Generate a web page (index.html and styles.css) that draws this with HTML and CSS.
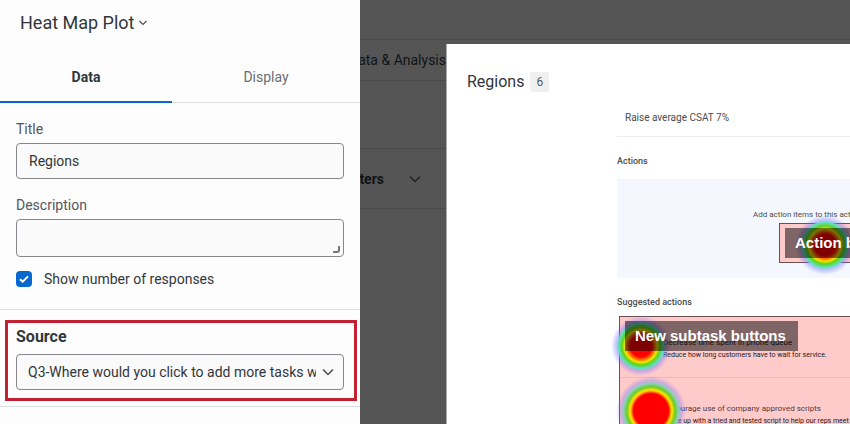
FILE: index.html
```html
<!DOCTYPE html>
<html lang="en">
<head>
  <meta charset="UTF-8" />
  <title>Heat Map Plot</title>
  <meta name="viewport" content="width=device-width, initial-scale=1.0" />
  <link rel="stylesheet" href="styles.css">
</head>
<body>
  <aside class="panel">
    <header class="panel-header">
      <button type="button" class="widget-type">
        Heat Map Plot
        <svg width="8" height="6" viewBox="0 0 8 6"><path d="M.5 1 4 4.5 7.5 1" /></svg>
      </button>
    </header>

    <div class="tabs" role="tablist">
      <button type="button" class="tab active" role="tab" aria-selected="true">Data</button>
      <button type="button" class="tab" role="tab" aria-selected="false">Display</button>
    </div>

    <section class="fields">
      <label for="title">Title</label>
      <input type="text" id="title" value="Regions" />

      <label for="description">Description</label>
      <div class="textarea-wrap">
        <textarea id="description"></textarea>
        <svg class="grip" width="9" height="9" viewBox="0 0 9 9"><path d="M7 1V5Q7 7 5 7H1" /></svg>
      </div>

      <div class="check">
        <span class="check-box">
          <input type="checkbox" id="responses" checked />
          <svg width="16" height="16" viewBox="0 0 16 16"><path d="M4 8.3 6.7 10.6 12 5.4" /></svg>
        </span>
        <label for="responses">Show number of responses</label>
      </div>
    </section>

    <section class="source">
      <div class="highlight">
        <label for="source">Source</label>
        <div class="select-wrap">
          <select id="source">
            <option>Q3-Where would you click to add more tasks within</option>
          </select>
          <svg width="12" height="8" viewBox="0 0 12 8"><path d="M1 1.5 6 6.5 11 1.5" /></svg>
        </div>
      </div>
    </section>
  </aside>

  <main class="stage">
    <div class="page-row top-bar"></div>
    <nav class="page-row nav-bar"><span>Data &amp; Analysis</span></nav>
    <div class="page-row title-bar"></div>
    <div class="page-row filter-bar">
      <span>Filters</span>
      <svg width="12" height="8" viewBox="0 0 12 8"><path d="M1 1.5 6 6.5 11 1.5" /></svg>
    </div>

    <section class="dialog">
      <header class="dialog-header">
        <h1>Regions</h1>
        <span class="count">6</span>
      </header>

      <div class="plan">
        <p class="goal">Raise average CSAT 7%</p>
        <h2>Actions</h2>
        <div class="empty">
          <p>Add action items to this action</p>
          <div class="region action-region">
            <span class="heat"></span>
            <strong>Action buttons</strong>
          </div>
        </div>
        <h2 class="suggested">Suggested actions</h2>
        <div class="region subtask-region">
          <div class="suggestion">
            <h3>Decrease time spent in phone queue</h3>
            <p>Reduce how long customers have to wait for service.</p>
          </div>
          <div class="suggestion">
            <h3>Encourage use of company approved scripts</h3>
            <p>Come up with a tried and tested script to help our reps meet CSAT</p>
          </div>
          <span class="heat first"></span>
          <span class="heat large second"></span>
          <strong>New subtask buttons</strong>
        </div>
      </div>
    </section>
  </main>
</body>
</html>
```

FILE: styles.css
```css
* {
  box-sizing: border-box;
}

body {
  margin: 0;
  min-height: 100vh;
  display: flex;
  font-family: Roboto, "Liberation Sans", sans-serif;
  font-size: 14px;
  line-height: 20px;
  color: #32363a;
  background: #fdfdfd;
}

h1, h2, h3, p {
  margin: 0;
}

button, input, select, textarea {
  font: inherit;
  color: inherit;
}

svg {
  fill: none;
  stroke: #4a4d52;
  stroke-width: 1.5;
}

/* settings panel */
.panel {
  flex: 0 0 360px;
  background: #fdfdfd;
}

.panel-header {
  padding: 11px 20px;
}

.widget-type {
  display: flex;
  align-items: center;
  gap: 4px;
  padding: 0;
  border: none;
  background: none;
  font-size: 18px;
  line-height: 24px;
}

.widget-type svg {
  stroke-width: 1.2;
}

.tabs {
  display: flex;
  margin-top: 6px;
  border-bottom: 1px solid #dcdee0;
}

.tab {
  flex: 188;
  height: 51px;
  margin-bottom: -1px;
  padding: 0;
  border: none;
  border-bottom: 2px solid transparent;
  background: none;
  color: #6a6d72;
}

.tab.active {
  flex: 172;
  border-color: #0768d0;
  color: #32363a;
  font-weight: bold;
}

.fields {
  padding: 16px 16px 20px;
  border-bottom: 1px solid #dcdee0;
}

.fields > label {
  display: block;
  margin-bottom: 4px;
  color: #54575c;
}

.fields > input,
textarea,
select {
  display: block;
  width: 100%;
  height: 36px;
  padding: 0 12px;
  border: 1px solid #85878b;
  border-radius: 4px;
  background: #fafafa;
}

.fields > input {
  margin-bottom: 16px;
}

.textarea-wrap,
.select-wrap {
  position: relative;
}

textarea {
  height: 38px;
  resize: none;
}

.grip {
  position: absolute;
  right: 3px;
  bottom: 3px;
}

.grip path {
  stroke: #777;
  stroke-width: 2;
}

.check {
  display: flex;
  align-items: center;
  gap: 12px;
  margin-top: 12px;
}

.check-box {
  position: relative;
  display: flex;
}

.check-box input {
  appearance: none;
  width: 16px;
  height: 16px;
  margin: 0;
  border-radius: 4px;
  background: #0768d0;
}

.check-box svg {
  position: absolute;
  inset: 0;
  stroke: #fff;
  stroke-width: 2;
  pointer-events: none;
}

.source {
  padding: 10px 3px 5px 5px;
  border-bottom: 1px solid #dcdee0;
}

.highlight {
  padding: 4px 10px 8px 8px;
  border: 3px solid #c22033;
}

.highlight label {
  display: block;
  margin-bottom: 7px;
  font-size: 16px;
  font-weight: bold;
}

select {
  appearance: none;
  padding: 0 27px 0 11px;
}

.select-wrap svg {
  position: absolute;
  right: 10px;
  top: 14px;
  pointer-events: none;
}

/* dimmed page behind the dialog */
.stage {
  position: relative;
  flex: 1;
  min-width: 0;
  overflow: hidden;
  background: #555;
  color: #111315;
}

.page-row {
  display: flex;
  align-items: center;
  justify-content: flex-end;
  border-bottom: 1px solid #4b4b4b;
  white-space: nowrap;
}

.top-bar {
  height: 40px;
}

.nav-bar,
.filter-bar {
  width: 86px;
}

.nav-bar {
  height: 41px;
}

.title-bar {
  height: 68px;
}

.filter-bar {
  height: 60px;
  gap: 25px;
  padding-right: 25px;
  font-weight: bold;
}

.filter-bar svg {
  flex: none;
  stroke: #222;
}

/* dialog */
.dialog {
  position: absolute;
  inset: 44px 0 0 86px;
  overflow: hidden;
  border-left: 1px solid #aaa;
  background: #fff;
  color: #32363a;
}

.dialog-header {
  display: flex;
  align-items: center;
  gap: 6px;
  padding: 28px 20px 0;
}

.dialog-header h1 {
  font-size: 16px;
  font-weight: normal;
}

.count {
  padding: 0 6px;
  border-radius: 2px;
  background: #f0f0f0;
  font-size: 12px;
  color: #54575c;
}

.plan {
  width: 432px;
  margin: 8px 0 0 170px;
  font-size: 8px;
  line-height: 12px;
  color: #4c4c4c;
  white-space: nowrap;
}

.goal {
  padding: 12px 8px;
  border-bottom: 1px solid #eee;
  font-size: 10px;
}

.plan h2 {
  padding: 18px 0 12px;
  font-size: 9px;
  font-weight: 500;
}

.plan .suggested {
  padding-bottom: 8px;
}

.empty {
  height: 99px;
  padding-top: 30px;
  background: #f4f8fe;
}

.empty p {
  padding-left: 136px;
}

.region {
  position: relative;
  border: 1px solid #6c4f52;
  background: #ffcaca;
}

.region strong {
  position: absolute;
  top: 4px;
  left: 5px;
  padding: 0 12px 0 10px;
  background: rgba(0, 0, 0, 0.5);
  color: #fff;
  font-family: "Liberation Sans", sans-serif;
  font-size: 15px;
  line-height: 30px;
}

.action-region {
  width: 156px;
  height: 40px;
  margin: 2px 0 0 162px;
}

.subtask-region {
  height: 240px;
  margin-left: 2px;
  color: #222;
}

.suggestion {
  height: 61px;
  padding: 20px 0 0 43px;
  border-bottom: 1px solid #eab9b9;
}

.suggestion + .suggestion {
  height: 90px;
  padding-top: 25px;
}

.suggestion h3 {
  font-size: 8px;
  font-weight: normal;
}

.suggestion p {
  font-size: 7px;
}

.suggestion + .suggestion h3 {
  color: #54383a;
}

.heat {
  position: absolute;
  top: -9px;
  left: 15px;
  width: 60px;
  height: 60px;
  border-radius: 50%;
  background: radial-gradient(closest-side, #f00 36%, #ff8c00 48%, #ffe600 54%, #5fd41a 63%, #5fe0c0 75%, rgba(120, 110, 255, 0.4) 83%, rgba(120, 110, 255, 0) 100%);
}

.heat.first {
  top: -1px;
  left: -9px;
}

.heat.large {
  width: 70px;
  height: 70px;
  background: radial-gradient(closest-side, #f00 50%, #ffb000 57%, #ffe600 60%, #6bcc2a 69%, #8fd0c0 79%, rgba(120, 110, 255, 0.35) 86%, rgba(120, 110, 255, 0) 100%);
}

.heat.second {
  top: 59px;
  left: -4px;
}
```
